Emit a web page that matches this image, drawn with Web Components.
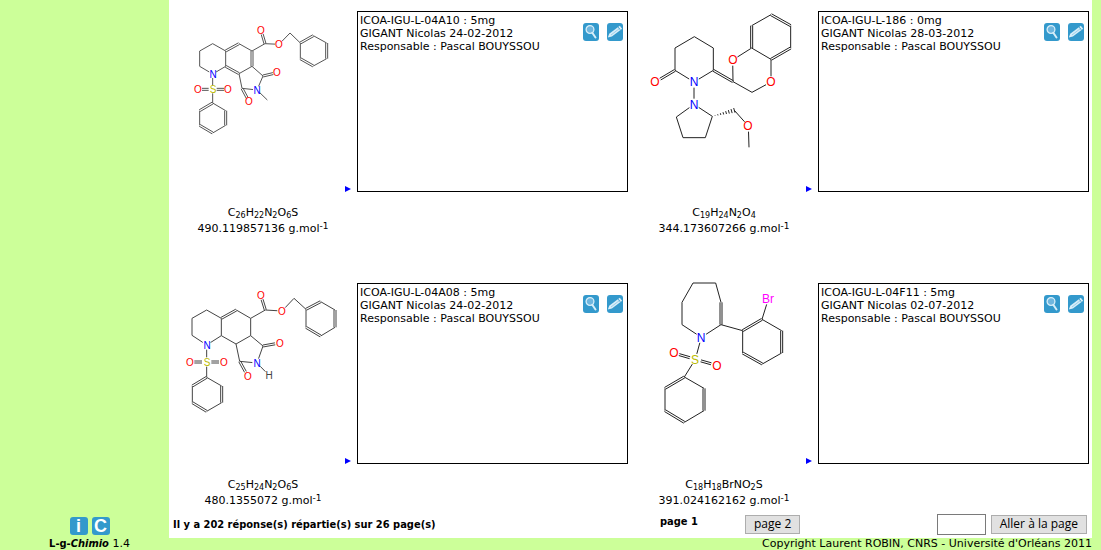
<!DOCTYPE html>
<html lang="fr">
<head>
<meta charset="utf-8">
<title>L-g-Chimio</title>
<style>
html, body { margin: 0; }
body { background: #cf9; color: #000; font: 11px/13px Verdana, "DejaVu Sans", sans-serif; }
</style>
</head>
<body>
<chimio-app>
  <chimio-card molecule="a10" reference="ICOA-IGU-L-04A10 : 5mg" author="GIGANT Nicolas 24-02-2012" formula="C26H22N2O6S" mass="490.119857136"></chimio-card>
  <chimio-card molecule="l186" reference="ICOA-IGU-L-186 : 0mg" author="GIGANT Nicolas 28-03-2012" formula="C19H24N2O4" mass="344.173607266"></chimio-card>
  <chimio-card molecule="a08" reference="ICOA-IGU-L-04A08 : 5mg" author="GIGANT Nicolas 24-02-2012" formula="C25H24N2O6S" mass="480.1355072"></chimio-card>
  <chimio-card molecule="f11" reference="ICOA-IGU-L-04F11 : 5mg" author="GIGANT Nicolas 02-07-2012" formula="C18H18BrNO2S" mass="391.024162162"></chimio-card>
  <chimio-pager slot="pager"></chimio-pager>
</chimio-app>
<script>
// Structures on a grid of thirds of a pixel: atoms are [x, y, label], bonds [from, to, order or "h" for hashed].
const MOLECULES = {
  a10: { origin: [-3, 33], size: 10, trim: 12, ink: '#555',
    atoms: [[127,221,'N'],[88,198],[88,152],[127,130],[166,152],[166,198],[206,130],[245,152],[245,198],[206,220],
      [284,130],[272,90,'O'],[326,132,'O'],[359,98],[390,128],[429,106],[469,128],[469,175],[429,197],[390,175],
      [278,227],[320,217,'O'],[260,269,'N'],[215,264],[236,303,'O'],[291,299],
      [127,267,'S'],[83,267,'O'],[173,267,'O'],[127,308],[166,331],[166,375],[127,398],[88,375],[88,331]],
    bonds: [[0,1],[1,2],[2,3],[3,4],[4,5],[5,0],[4,6,2],[6,7],[7,8,2],[8,9],[9,5,2],[7,10],[10,11,2],[10,12],[12,13],[13,14],
      [14,15,2],[15,16],[16,17,2],[17,18],[18,19,2],[19,14],[8,20],[20,21,2],[20,22],[22,23],[23,24,2],[23,9],[22,25],
      [0,26],[26,27,2],[26,28,2],[26,29],[29,30],[30,31,2],[31,32],[32,33,2],[33,34],[34,29,2]] },
  l186: { origin: [0, 33], size: 12, trim: 17, ink: '#222',
    atoms: [[134,210],[134,143],[192,109],[249,143],[249,210],[191,245,'N'],[75,245,'O'],[308,244],[307,179,'O'],[364,143],
      [422,177],[422,245,'O'],[365,276],[364,76],[422,43],[481,76],[481,143],[191,312,'N'],[138,350],[158,412],[225,412],
      [246,348],[312,330],[354,377,'O'],[356,441]],
    bonds: [[0,1],[1,2],[2,3],[3,4],[4,5],[5,0],[0,6,2],[4,7,2],[7,8],[8,9],[9,10],[10,11],[11,12],[12,7],[9,13,2],[13,14],
      [14,15,2],[15,16],[16,10,2],[5,17],[17,18],[18,19],[19,20],[20,21],[21,17],[21,22,'h'],[22,23],[23,24]] },
  a08: { origin: [-3, 24], size: 10, trim: 14, ink: '#444',
    atoms: [[109,209,'N'],[65,180],[65,129],[109,104],[153,129],[153,181],[198,104],[241,129],[241,181],[197,206],
      [285,104],[271,59,'O'],[335,107,'O'],[371,69],[407,102],[451,79],[494,104],[494,156],[451,182],[407,156],
      [278,212],[328,203,'O'],[260,263,'N'],[208,258],[232,302,'O'],[295,299,'H'],
      [109,260,'S'],[58,260,'O'],[160,260,'O'],[109,306],[154,332],[154,382],[109,408],[66,382],[66,332]],
    bonds: [[0,1],[1,2],[2,3],[3,4],[4,5],[5,0],[4,6,2],[6,7],[7,8],[8,9],[9,5],[7,10],[10,11,2],[10,12],[12,13],[13,14],
      [14,15,2],[15,16],[16,17,2],[17,18],[18,19,2],[19,14],[8,20],[20,21,2],[20,22],[22,23],[23,24,2],[23,9],[22,25],
      [0,26],[26,27,2],[26,28,2],[26,29],[29,30],[30,31,2],[31,32],[32,33,2],[33,34],[34,29,2]] },
  f11: { origin: [-30, 39], size: 12, trim: 17, ink: '#222',
    atoms: [[125,163],[125,96],[158,38],[226,38],[242,96],[242,163],[183,201,'N'],[307,181],[365,147],[424,181],[424,248],
      [366,281],[307,248],[384,86,'Br'],[165,267,'S'],[100,248,'O'],[229,285,'O'],
      [132,320],[191,354],[191,421],[132,456],[74,421],[74,354]],
    bonds: [[0,1],[1,2],[2,3],[3,4],[4,5,2],[5,6],[6,0],[5,7],[7,8,2],[8,9],[9,10,2],[10,11],[11,12,2],[12,7],[8,13],
      [6,14],[14,15,2],[14,16,2],[14,17],[17,18],[18,19,2],[19,20],[20,21,2],[21,22],[22,17,2]] }
};
const INKS = { N: '#00f', O: '#f00', S: '#bb0', Br: '#f0f', H: '#444' };

class ChimioMolecule extends HTMLElement {
  connectedCallback() {
    const { origin, size, trim, ink, atoms, bonds } = MOLECULES[this.getAttribute('name')];
    const at = ([x, y]) => [(x - origin[0] + 1) / 3, (y - origin[1] + 1) / 3];
    let path = '';
    const line = (x1, y1, x2, y2) => { path += `M${x1.toFixed(2)} ${y1.toFixed(2)}L${x2.toFixed(2)} ${y2.toFixed(2)}`; };
    for (const [i, j, kind] of bonds) {
      let [x1, y1] = at(atoms[i]), [x2, y2] = at(atoms[j]);
      const length = Math.hypot(x2 - x1, y2 - y1), ux = (x2 - x1) / length, uy = (y2 - y1) / length;
      if (atoms[i][2]) { x1 += ux * trim / 3; y1 += uy * trim / 3; }
      if (atoms[j][2]) { x2 -= ux * trim / 3; y2 -= uy * trim / 3; }
      if (kind === 2) {
        for (const side of [-1, 1]) line(x1 - uy * side, y1 + ux * side, x2 - uy * side, y2 + ux * side);
      } else if (kind === 'h') {
        for (let k = 1; k <= 8; k++) {
          const t = k / 8, w = t * 2.4, x = x1 + (x2 - x1) * t, y = y1 + (y2 - y1) * t;
          line(x - uy * w, y + ux * w, x + uy * w, y - ux * w);
        }
      } else line(x1, y1, x2, y2);
    }
    const labels = atoms.filter(a => a[2]).map(a => {
      const [x, y] = at(a);
      return `<text x="${Math.round(x)}" y="${Math.round(y + size * .36)}" fill="${INKS[a[2]]}">${a[2]}</text>`;
    }).join('');
    this.attachShadow({ mode: 'open' }).innerHTML = `<style>
      :host { display: block; }
      svg { display: block; width: 188px; height: 181px; overflow: visible; }
      text { font: ${size}px "Liberation Sans", Arial, sans-serif; text-anchor: middle; }
      </style><svg viewBox="0 0 188 181"><path d="${path}" fill="none" stroke="${ink}" stroke-width="1"/>${labels}</svg>`;
  }
}

const ICONS = {
  search: '<circle cx="7" cy="6.500" r="3.900" fill="#6fb6de" stroke="#d8eef9" stroke-width="1.300"/><path d="M9.300 9.800l3.200 4.700" stroke="#d8eef9" stroke-width="2" stroke-linecap="round"/>',
  edit: '<path d="M.8 14.500l1.400-3.700L12.800 2.800l2.400 2.900L4.900 13.500z" fill="#d8eef9"/><path d="M4 12l9-6.900" stroke="#8cc6e6" stroke-width=".8"/><path d="M11 4l2.300 2.900" stroke="#39c" stroke-width=".8"/>'
};
class ChimioIcon extends HTMLElement {
  connectedCallback() {
    const name = this.getAttribute('name');
    this.attachShadow({ mode: 'open' }).innerHTML = `<style>
      :host { display: block; }
      a { display: block; width: 16px; height: 18px; border-radius: 3px; background: #39c; }
      svg { display: block; }
      </style><a href="#${name}" aria-label="${this.getAttribute('label')}"><svg width="16" height="18" viewBox="0 0 16 18" fill="none">${ICONS[name]}</svg></a>`;
  }
}

class ChimioCard extends HTMLElement {
  connectedCallback() {
    const get = n => this.getAttribute(n);
    const formula = get('formula').replace(/\d+/g, '<sub>$&</sub>');
    this.attachShadow({ mode: 'open' }).innerHTML = `<style>
      :host { display: grid; grid-template-columns: 188px minmax(0, 1fr); padding: 11px 2px 0 0; }
      .drawing { position: relative; }
      .arrow { position: absolute; right: 6px; bottom: 0; width: 6px; height: 6px; }
      .arrow svg { display: block; }
      .details { box-sizing: border-box; min-height: 181px; border: 1px solid #000; padding: 2px 4px 2px 2px; display: flex; align-items: flex-start; }
      .details p { margin: 0; flex: 1; }
      .tools { display: flex; gap: 8px; padding-top: 9px; }
      .caption { margin: 13px 0 0; line-height: 16px; text-align: center; white-space: nowrap; }
      sub, sup { font-size: 9px; line-height: 0; }
      sub { font-size: 8px; vertical-align: -2px; }
      sup { vertical-align: 3px; }
      </style>
      <div class="drawing"><chimio-molecule name="${get('molecule')}"></chimio-molecule>
        <a class="arrow" href="#select" aria-label="Voir"><svg width="6" height="6"><path d="M0 0L6 3L0 6z" fill="#00f"/></svg></a></div>
      <div class="details"><p>${get('reference')}<br>${get('author')}<br>Responsable : Pascal BOUYSSOU</p>
        <div class="tools"><chimio-icon name="search" label="Consulter"></chimio-icon><chimio-icon name="edit" label="Modifier"></chimio-icon></div></div>
      <p class="caption">${formula}<br>${get('mass')} g.mol<sup>-1</sup></p>`;
  }
}

class ChimioPager extends HTMLElement {
  connectedCallback() {
    this.attachShadow({ mode: 'open' }).innerHTML = `<style>
      :host { display: grid; grid-template-columns: 1fr 1fr; align-items: center; height: 29px; box-sizing: border-box; padding-bottom: 1px; }
      .count, .current { font-family: "DejaVu Sans Condensed", Verdana, sans-serif; font-weight: bold; white-space: nowrap; }
      .count { padding: 2px 0 0 4px; }
      form { display: flex; align-items: center; padding: 2px 4px 0 30px; margin: 0; }
      .current { width: 85px; padding-bottom: 6px; }
      button { box-sizing: border-box; height: 19px; margin: 0; padding: 0 8px; border: 1px solid #adadad; background: #e1e1e1; color: #000; font: 12px/16px "Open Sans", "Segoe UI", sans-serif; white-space: nowrap; }
      input { box-sizing: border-box; width: 49px; height: 21px; margin: 0 5px 0 auto; border: 1px solid #7a7a7a; background: #fff; padding: 1px 3px; font: 12px "Open Sans", "Segoe UI", sans-serif; }
      </style>
      <div class="count">Il y a 202 réponse(s) répartie(s) sur 26 page(s)</div>
      <form><span class="current">page 1</span><button type="button">page 2</button><input type="text" aria-label="Numéro de page"><button type="button">Aller à la page</button></form>`;
  }
}

class ChimioApp extends HTMLElement {
  connectedCallback() {
    this.attachShadow({ mode: 'open' }).innerHTML = `<style>
      :host { display: grid; grid-template-columns: 169px minmax(0, 1fr); min-height: 100vh; padding-right: 9px; box-sizing: border-box; }
      aside { display: flex; flex-direction: column; justify-content: flex-end; align-items: center; padding-left: 10px; }
      .badges { display: flex; gap: 4px; margin-bottom: 3px; }
      .badges a { width: 18px; height: 18px; border-radius: 3px; background: #39c; color: #fff; font: bold 18px/18px "Liberation Sans", Arial, sans-serif; text-align: center; text-decoration: none; }
      .right { display: flex; flex-direction: column; min-width: 0; }
      main { background: #fff; flex: 1; padding-right: 1px; }
      .cards { display: grid; grid-template-columns: 1fr 1fr; row-gap: 35px; }
      footer, .version { line-height: 12px; white-space: nowrap; }
      .version b { font-family: "DejaVu Sans Condensed", Verdana, sans-serif; }
      footer { text-align: right; }
      </style>
      <aside><div class="badges"><a href="#infos" title="Informations">i</a><a href="#contact" title="Contact">C</a></div>
        <div class="version"><b>L-g-<i>Chimio</i></b> 1.4</div></aside>
      <div class="right"><main><div class="cards"><slot></slot></div><slot name="pager"></slot></main>
        <footer>Copyright Laurent ROBIN, CNRS - Université d'Orléans 2011</footer></div>`;
  }
}
customElements.define('chimio-molecule', ChimioMolecule);
customElements.define('chimio-icon', ChimioIcon);
customElements.define('chimio-card', ChimioCard);
customElements.define('chimio-pager', ChimioPager);
customElements.define('chimio-app', ChimioApp);
</script>
</body>
</html>
